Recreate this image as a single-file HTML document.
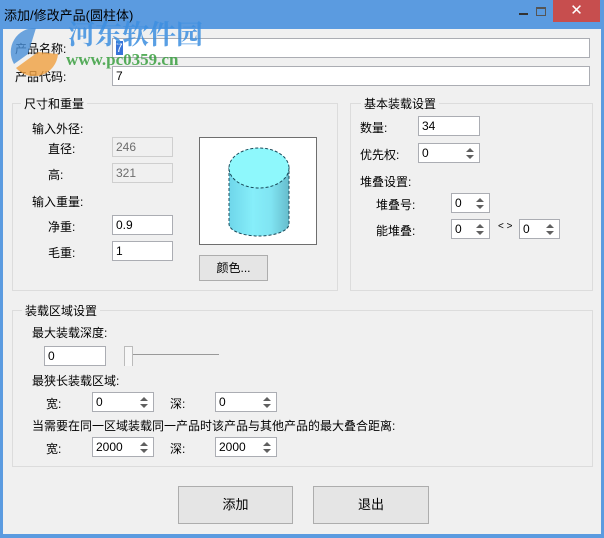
<!DOCTYPE html>
<html><head><meta charset="utf-8"><style>
*{box-sizing:border-box;margin:0;padding:0}
body{width:604px;height:538px;overflow:hidden;background:#5b9be0;font-family:"Liberation Sans","Noto Sans CJK SC",sans-serif;font-size:12px;color:#000;position:relative}
.a{position:absolute;white-space:nowrap}
#client{position:absolute;left:3px;top:29px;width:598px;height:505px;background:#f0f0f0}
.in{position:absolute;background:#fff;border:1px solid #abadb3;font-size:12px;padding:2px 0 0 3px;height:20px}
.dis{background:#f0f0f0;border-color:#cfcfcf;color:#6d6d6d}
.sp::after{content:"";position:absolute;right:5px;top:4px;border:4px solid transparent;border-bottom:4px solid #606060;border-top:0}
.sp::before{content:"";position:absolute;right:5px;bottom:3px;border:4px solid transparent;border-top:4px solid #606060;border-bottom:0}
.grp{position:absolute;border:1px solid #dcdcdc}
.lg{position:absolute;background:#f0f0f0;padding:0 3px;font-size:12px;top:-9px}
.btn{position:absolute;background:#e5e5e5;border:1px solid #adadad;text-align:center;font-size:12px}
</style></head><body>
<div class="a" style="left:4px;top:5px;font-size:13px;color:#000">添加/修改产品(圆柱体)</div>
<div class="a" style="left:519px;top:13px;width:9px;height:2px;background:#333"></div>
<div class="a" style="left:536px;top:7px;width:10px;height:9px;border:1px solid #555;border-top-width:2px"></div>
<div class="a" style="left:553px;top:0;width:47px;height:22px;background:#c74e4e;color:#fff;text-align:center;font-size:15px;line-height:21px">✕</div>
<div id="client"></div>

<div class="a" style="left:15px;top:40px">产品名称:</div>
<div class="in" style="left:112px;top:38px;width:478px"><span style="background:#3874d8;color:#fff">7</span></div>
<div class="a" style="left:15px;top:68px">产品代码:</div>
<div class="in" style="left:112px;top:66px;width:478px">7</div>

<div class="grp" style="left:12px;top:103px;width:326px;height:188px"><div class="lg" style="left:8px">尺寸和重量</div></div>
<div class="a" style="left:32px;top:120px">输入外径:</div>
<div class="a" style="left:48px;top:140px">直径:</div>
<div class="in dis" style="left:112px;top:137px;width:61px">246</div>
<div class="a" style="left:48px;top:166px">高:</div>
<div class="in dis" style="left:112px;top:163px;width:61px">321</div>
<div class="a" style="left:32px;top:193px">输入重量:</div>
<div class="a" style="left:48px;top:218px">净重:</div>
<div class="in" style="left:112px;top:215px;width:61px">0.9</div>
<div class="a" style="left:48px;top:244px">毛重:</div>
<div class="in" style="left:112px;top:241px;width:61px">1</div>
<div class="a" style="left:199px;top:137px;width:118px;height:108px;background:#fff;border:1px solid #6e6e6e">
<svg width="116" height="106" viewBox="0 0 116 106"><defs><linearGradient id="g" x1="0" x2="1"><stop offset="0" stop-color="#6fd6ea"/><stop offset=".4" stop-color="#86eefa"/><stop offset=".7" stop-color="#80e4f2"/><stop offset="1" stop-color="#66bccc"/></linearGradient></defs>
<path d="M29 30 V86 A30 12 0 0 0 89 86 V30 Z" fill="url(#g)" stroke="#1a4a5a" stroke-dasharray="3 2"/>
<ellipse cx="59" cy="30" rx="30" ry="20" fill="#8ef8fc" stroke="#1a4a5a" stroke-dasharray="3 2"/></svg></div>
<div class="btn" style="left:199px;top:255px;width:69px;height:26px;line-height:24px">颜色...</div>

<div class="grp" style="left:350px;top:103px;width:243px;height:188px"><div class="lg" style="left:10px">基本装载设置</div></div>
<div class="a" style="left:360px;top:119px">数量:</div>
<div class="in" style="left:418px;top:116px;width:62px">34</div>
<div class="a" style="left:360px;top:146px">优先权:</div>
<div class="in sp" style="left:418px;top:143px;width:62px">0</div>
<div class="a" style="left:360px;top:173px">堆叠设置:</div>
<div class="a" style="left:376px;top:196px">堆叠号:</div>
<div class="in sp" style="left:451px;top:193px;width:39px">0</div>
<div class="a" style="left:376px;top:222px">能堆叠:</div>
<div class="in sp" style="left:451px;top:219px;width:39px">0</div>
<div class="a" style="left:498px;top:221px;font-size:10px">&lt; &gt;</div>
<div class="in sp" style="left:519px;top:219px;width:41px">0</div>

<div class="grp" style="left:12px;top:310px;width:581px;height:157px"><div class="lg" style="left:9px">装载区域设置</div></div>
<div class="a" style="left:32px;top:324px">最大装载深度:</div>
<div class="in" style="left:44px;top:346px;width:62px">0</div>
<div class="a" style="left:124px;top:346px;width:9px;height:20px;background:#f7f7f7;border:1px solid #bbb;border-bottom:none"></div>
<div class="a" style="left:133px;top:354px;width:86px;height:1px;background:#999"></div>
<div class="a" style="left:32px;top:372px">最狭长装载区域:</div>
<div class="a" style="left:46px;top:395px">宽:</div>
<div class="in sp" style="left:92px;top:392px;width:62px">0</div>
<div class="a" style="left:170px;top:395px">深:</div>
<div class="in sp" style="left:215px;top:392px;width:62px">0</div>
<div class="a" style="left:32px;top:417px">当需要在同一区域装载同一产品时该产品与其他产品的最大叠合距离:</div>
<div class="a" style="left:46px;top:440px">宽:</div>
<div class="in sp" style="left:92px;top:437px;width:62px">2000</div>
<div class="a" style="left:170px;top:440px">深:</div>
<div class="in sp" style="left:215px;top:437px;width:62px">2000</div>

<div class="btn" style="left:178px;top:486px;width:115px;height:38px;line-height:36px;font-size:13px">添加</div>
<div class="btn" style="left:313px;top:486px;width:116px;height:38px;line-height:36px;font-size:13px">退出</div>

<svg class="a" style="left:8px;top:24px" width="56" height="52"><path d="M28 4 A24 24 0 0 0 6 40 L20 30 Z" fill="#4a90d8" opacity=".8"/><path d="M8 44 A24 24 0 0 0 50 30 L30 28 Z" fill="#f0a040" opacity=".8"/></svg>
<div class="a" style="left:68px;top:13px;font-size:27px;font-weight:bold;color:#3d8fe0;opacity:.85;font-family:'Noto Serif CJK SC',serif">河东软件园</div>
<div class="a" style="left:66px;top:50px;font-size:17px;font-weight:bold;color:#3aa040;opacity:.85;font-family:'Liberation Serif',serif">www.pc0359.cn</div>
</body></html>
